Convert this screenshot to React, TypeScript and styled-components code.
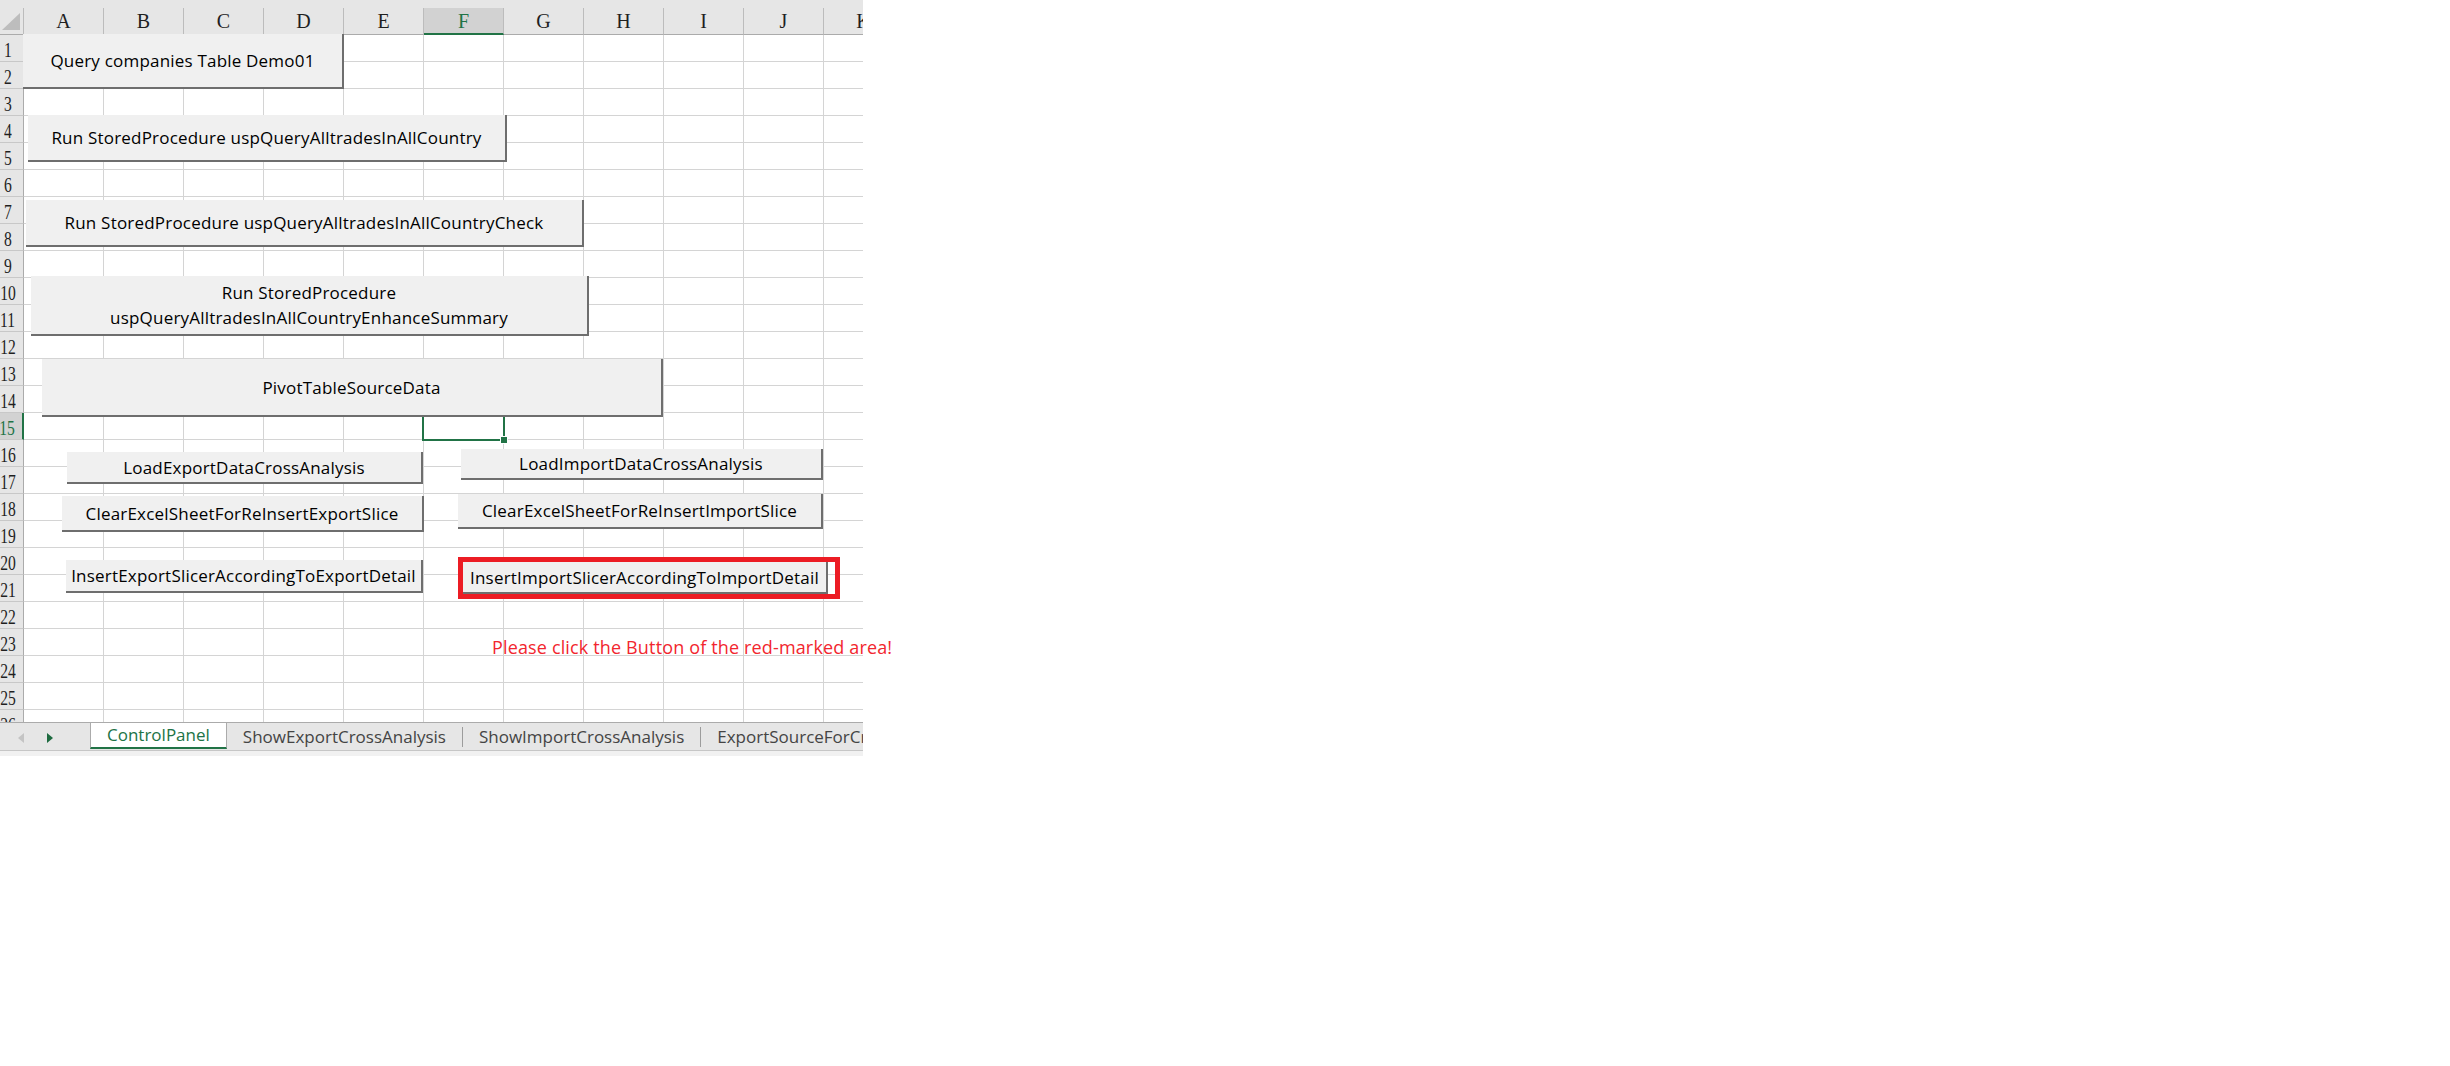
import React from 'react';
import styled, { createGlobalStyle } from 'styled-components';

const GlobalStyle = createGlobalStyle`
  html, body { margin: 0; padding: 0; background: #ffffff; }
  body { font-family: "Open Sans", "Noto Sans", sans-serif; }
  *, *::before, *::after { box-sizing: border-box; }
`;

const GREEN = '#217346';
const COLS = ['A', 'B', 'C', 'D', 'E', 'F', 'G', 'H', 'I', 'J', 'K'];
const ROWS = Array.from({ length: 26 }, (_, i) => i + 1);
const ACTIVE_COL = 'F';
const ACTIVE_ROW = 15;

const Workbook = styled.div`
  position: relative;
  width: 863px;
`;

const SheetViewport = styled.div`
  position: relative;
  height: 722px;
  overflow: hidden;
`;

const Grid = styled.div`
  display: grid;
  grid-template-columns: 24px repeat(11, 80px);
  grid-template-rows: 35px;
  grid-auto-rows: 27px;
`;

const HeaderCell = styled.div`
  display: flex;
  padding-top: 8px;
  background: #e6e6e6;
`;

const CornerLabel = styled.div`
  flex: 1;
  display: flex;
  align-items: flex-end;
  justify-content: flex-end;
  padding: 0 3px 4px 0;
  border-right: 1px solid #bcbcbc;
  border-bottom: 1px solid #ababab;
`;

const ColLabel = styled.div<{ $active?: boolean }>`
  flex: 1;
  display: flex;
  align-items: center;
  justify-content: center;
  border-right: 1px solid #bcbcbc;
  border-bottom: ${(p) => (p.$active ? `2px solid ${GREEN}` : '1px solid #ababab')};
  background: ${(p) => (p.$active ? '#d2d2d2' : 'transparent')};
  color: ${(p) => (p.$active ? GREEN : '#1f1f1f')};
  font-family: "Liberation Serif", "DejaVu Serif", serif;
  font-size: 20px;
  line-height: 1;
`;

const RowHeader = styled.div<{ $active?: boolean }>`
  display: flex;
  align-items: center;
  justify-content: center;
  padding: 3px 8px 0 0;
  overflow: hidden;
  background: ${(p) => (p.$active ? '#d2d2d2' : '#e6e6e6')};
  border-right: ${(p) => (p.$active ? `2px solid ${GREEN}` : '1px solid #ababab')};
  border-bottom: 1px solid #c8c8c8;
  color: ${(p) => (p.$active ? GREEN : '#1f1f1f')};
  font-family: "Liberation Serif", "DejaVu Serif", serif;
  font-size: 20px;
  line-height: 1;
`;

const RowNumber = styled.span`
  display: inline-block;
  transform: scaleX(0.78);
  white-space: nowrap;
`;

const Cell = styled.div`
  border-right: 1px solid #d4d4d4;
  border-bottom: 1px solid #d4d4d4;
`;

const Selection = styled.div`
  position: absolute;
  left: 422px;
  top: 411px;
  width: 83px;
  height: 30px;
  border: 2px solid ${GREEN};
`;

const FillHandle = styled.div`
  position: absolute;
  right: -5px;
  bottom: -5px;
  width: 8px;
  height: 8px;
  background: ${GREEN};
  border: 1px solid #ffffff;
`;

const ShapeLayer = styled.div`
  position: absolute;
  left: 0;
  top: 0;
  width: 0;
  height: 0;
`;

const Shape = styled.div<{ $x: number; $y: number; $w: number; $h: number }>`
  position: absolute;
  left: ${(p) => p.$x}px;
  top: ${(p) => p.$y}px;
  width: ${(p) => p.$w}px;
  height: ${(p) => p.$h}px;
  display: flex;
`;

const MacroButton = styled.button<{ $w?: number }>`
  margin: 0;
  padding: 0 2px;
  flex: ${(p) => (p.$w ? `0 0 ${p.$w}px` : '1')};
  display: flex;
  flex-direction: column;
  align-items: center;
  justify-content: center;
  background: #f0f0f0;
  border: none;
  border-right: 2px solid #6e6e6e;
  border-bottom: 2px solid #6e6e6e;
  color: #000000;
  font-family: "Open Sans", "Noto Sans", sans-serif;
  font-size: 17px;
  letter-spacing: 0.2px;
  line-height: 25px;
  text-align: center;
  white-space: nowrap;
  cursor: pointer;
`;

const HighlightFrame = styled.div`
  position: absolute;
  left: 458px;
  top: 557px;
  width: 382px;
  height: 42px;
  border: 5px solid #ec1c24;
  display: flex;
`;

const Note = styled.div`
  position: absolute;
  left: 492px;
  top: 634px;
  color: #f2262e;
  font-family: "Open Sans", "Noto Sans", sans-serif;
  font-size: 18px;
  letter-spacing: 0.15px;
  line-height: 26px;
  white-space: nowrap;
`;

const TabBar = styled.div`
  display: flex;
  height: 29px;
  background: #e6e6e6;
  border-top: 1px solid #ababab;
  border-bottom: 1px solid #c6c6c6;
  overflow: hidden;
`;

const NavArea = styled.div`
  flex: 0 0 90px;
  display: flex;
  align-items: center;
  gap: 23px;
  padding: 2px 0 0 18px;
`;

const Tab = styled.div<{ $active?: boolean }>`
  flex: 0 0 auto;
  display: flex;
  align-items: center;
  height: ${(p) => (p.$active ? '27px' : '26px')};
  margin-top: ${(p) => (p.$active ? '-1px' : '0')};
  padding: 0 16px;
  background: ${(p) => (p.$active ? '#ffffff' : 'transparent')};
  border-left: ${(p) => (p.$active ? '1px solid #ababab' : 'none')};
  border-right: ${(p) => (p.$active ? '1px solid #ababab' : 'none')};
  border-bottom: ${(p) => (p.$active ? `2px solid ${GREEN}` : 'none')};
  color: ${(p) => (p.$active ? GREEN : '#444444')};
  font-family: "Open Sans", "Noto Sans", sans-serif;
  font-size: 17px;
  white-space: nowrap;
`;

const TabSeparator = styled.div`
  flex: 0 0 1px;
  height: 20px;
  align-self: center;
  background: #9c9c9c;
`;

const BottomStrip = styled.div`
  height: 5px;
  background: #f1f1f1;
`;

const Arrow = ({ dir, color }: { dir: 'left' | 'right'; color: string }) => (
  <svg width="6" height="10" viewBox="0 0 6 10">
    {dir === 'left' ? <polygon points="6,0 6,10 0,5" fill={color} /> : <polygon points="0,0 0,10 6,5" fill={color} />}
  </svg>
);

type Btn = { x: number; y: number; w: number; h: number; lines: string[] };

const BUTTONS: Btn[] = [
  { x: 23, y: 34, w: 321, h: 55, lines: ['Query companies Table Demo01'] },
  { x: 28, y: 115, w: 479, h: 47, lines: ['Run StoredProcedure uspQueryAlltradesInAllCountry'] },
  { x: 26, y: 200, w: 558, h: 47, lines: ['Run StoredProcedure uspQueryAlltradesInAllCountryCheck'] },
  { x: 31, y: 276, w: 558, h: 60, lines: ['Run StoredProcedure', 'uspQueryAlltradesInAllCountryEnhanceSummary'] },
  { x: 42, y: 359, w: 621, h: 58, lines: ['PivotTableSourceData'] },
  { x: 67, y: 452, w: 356, h: 32, lines: ['LoadExportDataCrossAnalysis'] },
  { x: 461, y: 449, w: 362, h: 31, lines: ['LoadImportDataCrossAnalysis'] },
  { x: 62, y: 496, w: 362, h: 36, lines: ['ClearExcelSheetForReInsertExportSlice'] },
  { x: 458, y: 494, w: 365, h: 35, lines: ['ClearExcelSheetForReInsertImportSlice'] },
  { x: 66, y: 560, w: 357, h: 33, lines: ['InsertExportSlicerAccordingToExportDetail'] },
];

const TABS = ['ShowExportCrossAnalysis', 'ShowImportCrossAnalysis', 'ExportSourceForCrossAnalysis'];

export default function App() {
  return (
    <>
      <GlobalStyle />
      <Workbook>
        <SheetViewport>
          <Grid>
            <HeaderCell>
              <CornerLabel>
                <svg width="18" height="17" viewBox="0 0 18 17">
                  <polygon points="18,0 18,17 0,17" fill="#bdbdbd" />
                </svg>
              </CornerLabel>
            </HeaderCell>
            {COLS.map((c) => (
              <HeaderCell key={c}>
                <ColLabel $active={c === ACTIVE_COL}>{c}</ColLabel>
              </HeaderCell>
            ))}
            {ROWS.map((r) => (
              <React.Fragment key={r}>
                <RowHeader $active={r === ACTIVE_ROW}>
                  <RowNumber>{r}</RowNumber>
                </RowHeader>
                {COLS.map((c) => (
                  <Cell key={c} />
                ))}
              </React.Fragment>
            ))}
          </Grid>
          <Selection>
            <FillHandle />
          </Selection>
        </SheetViewport>

        <ShapeLayer>
          {BUTTONS.map((b, i) => (
            <Shape key={i} $x={b.x} $y={b.y} $w={b.w} $h={b.h}>
              <MacroButton>
                {b.lines.map((l) => (
                  <span key={l}>{l}</span>
                ))}
              </MacroButton>
            </Shape>
          ))}
          <HighlightFrame>
            <MacroButton $w={365}>
              <span>InsertImportSlicerAccordingToImportDetail</span>
            </MacroButton>
          </HighlightFrame>
          <Note>Please click the Button of the red-marked area!</Note>
        </ShapeLayer>

        <TabBar>
          <NavArea>
            <Arrow dir="left" color="#c4c4c4" />
            <Arrow dir="right" color="#1e6b40" />
          </NavArea>
          <Tab $active>ControlPanel</Tab>
          {TABS.map((t, i) => (
            <React.Fragment key={t}>
              {i > 0 && <TabSeparator />}
              <Tab>{t}</Tab>
            </React.Fragment>
          ))}
        </TabBar>
        <BottomStrip />
      </Workbook>
    </>
  );
}
